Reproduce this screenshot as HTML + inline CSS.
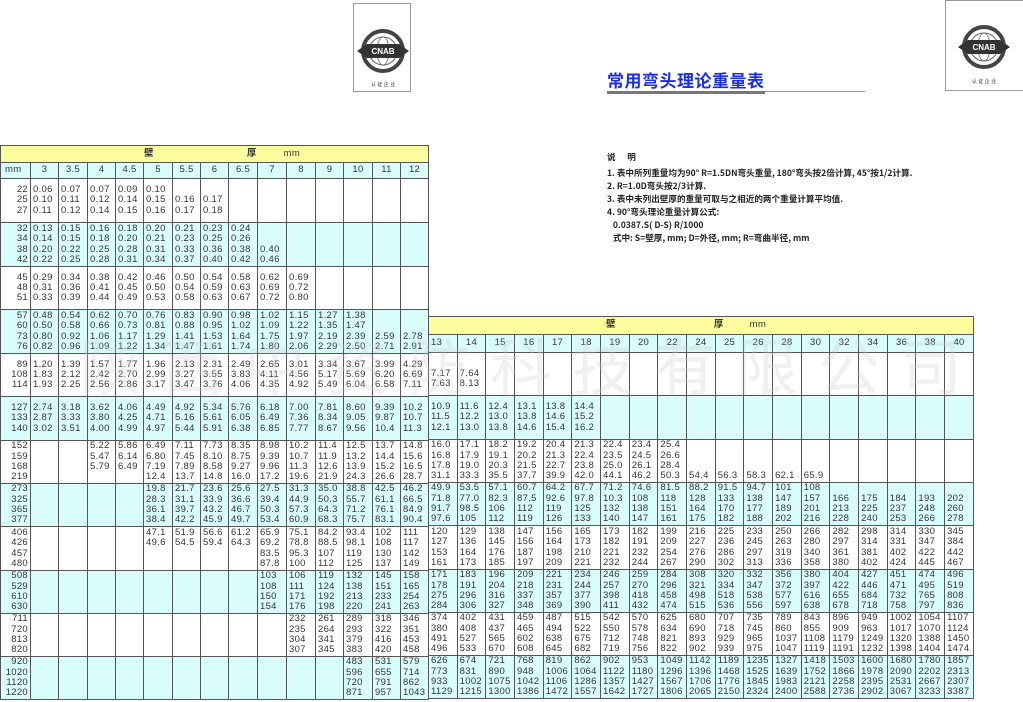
<!DOCTYPE html>
<html><head><meta charset="utf-8"><style>
body{margin:0;width:1023px;height:702px;background:#fff;position:relative;overflow:hidden;font-family:"Liberation Sans","Noto Sans CJK SC",sans-serif;}
table{position:absolute;border-collapse:collapse;table-layout:fixed;font-size:9.5px;color:#333;letter-spacing:0.3px;}
td{border:1px solid #555;padding:0 0 0 2px;vertical-align:middle;line-height:10.3px;white-space:nowrap;overflow:hidden;}
td:first-child{text-align:right;padding:0 2px 0 0;}
tr.y td{background:#fdfd9e;font-weight:bold;}
tr.h td{background:#d9fcfd;text-align:center;padding:0;}
tr.h td:first-child{text-align:left;padding-left:4px}
tr.c td{background:#d9fcfd;}
#R td:first-child{text-align:left;padding:0 0 0 2px;}
.logo{position:absolute;border:1px solid #999;background:#fff;}
.note{position:absolute;left:607px;font-size:8.6px;color:#222;font-family:"Noto Sans CJK SC",sans-serif;white-space:nowrap;font-weight:bold;}
</style></head><body>

<div class="logo" style="left:353px;top:3px;width:56px;height:87px;">
<svg width="56" height="87"><g transform="translate(29,47)">
<circle r="20" fill="none" stroke="#444" stroke-width="4"/><circle r="14" fill="none" stroke="#666" stroke-width="1"/>
<ellipse rx="6" ry="14" fill="none" stroke="#666" stroke-width="0.8"/><line x1="-14" y1="-5" x2="14" y2="-5" stroke="#666" stroke-width="0.8"/><line x1="-14" y1="5" x2="14" y2="5" stroke="#666" stroke-width="0.8"/>
<path d="M-26 0 L-16 -7 L16 -7 L26 0 L16 7 L-16 7 Z" fill="#333"/>
<text x="0" y="3" font-size="8" fill="#fff" text-anchor="middle" font-weight="bold">CNAB</text></g>
<text x="29" y="82" font-size="5" text-anchor="middle" fill="#333">认 证 企 业</text></svg></div>
<div class="logo" style="left:945px;top:0px;width:78px;height:89px;">
<svg width="78" height="89"><g transform="translate(38,46)">
<circle r="20" fill="none" stroke="#444" stroke-width="4"/><circle r="14" fill="none" stroke="#666" stroke-width="1"/>
<ellipse rx="6" ry="14" fill="none" stroke="#666" stroke-width="0.8"/><line x1="-14" y1="-5" x2="14" y2="-5" stroke="#666" stroke-width="0.8"/><line x1="-14" y1="5" x2="14" y2="5" stroke="#666" stroke-width="0.8"/>
<path d="M-26 0 L-16 -7 L16 -7 L26 0 L16 7 L-16 7 Z" fill="#333"/>
<text x="0" y="3" font-size="8" fill="#fff" text-anchor="middle" font-weight="bold">CNAB</text></g>
<text x="38" y="82" font-size="5" text-anchor="middle" fill="#333">认 证 企 业</text></svg></div>

<div style="position:absolute;left:607px;top:67px;font-size:17px;font-weight:bold;color:#1a2ee8;font-family:'Noto Sans CJK SC',sans-serif;letter-spacing:0.5px">常用弯头理论重量表</div>
<div style="position:absolute;left:607px;top:91px;width:258px;height:1px;background:#999"></div>
<div style="position:absolute;left:607px;top:91px;width:158px;height:3px;background:#777"></div>

<div class="note" style="top:151px">说&nbsp;&nbsp;&nbsp;&nbsp;&nbsp;&nbsp;明</div>
<div class="note" style="top:167px">1. 表中所列重量均为90° R=1.5DN弯头重量, 180°弯头按2倍计算, 45°按1/2计算.</div>
<div class="note" style="top:180px">2. R=1.0D弯头按2/3计算.</div>
<div class="note" style="top:193px">3. 表中未列出壁厚的重量可取与之相近的两个重量计算平均值.</div>
<div class="note" style="top:206px">4. 90°弯头理论重量计算公式:</div>
<div class="note" style="top:219px">&nbsp;&nbsp;&nbsp;0.0387.S( D-S) R/1000</div>
<div class="note" style="top:232px">&nbsp;&nbsp;&nbsp;式中: S=壁厚, mm; D=外径, mm; R=弯曲半径, mm</div>

<table style="left:0;top:145px;width:428px">
<colgroup><col style="width:30px"><col style="width:28px"><col style="width:29px"><col style="width:28px"><col style="width:28px"><col style="width:29px"><col style="width:28px"><col style="width:28px"><col style="width:29px"><col style="width:29px"><col style="width:29px"><col style="width:28px"><col style="width:29px"><col style="width:28px"><col style="width:28px"></colgroup>
<tr class="y" style="height:17px"><td colspan="15" style="text-align:left;padding:0"><span style="margin-left:143px">壁</span><span style="margin-left:93px">厚</span><span style="margin-left:27px;font-weight:normal">mm</span></td></tr>
<tr class="h" style="height:16px"><td>mm</td><td>3</td><td>3.5</td><td>4</td><td>4.5</td><td>5</td><td>5.5</td><td>6</td><td>6.5</td><td>7</td><td>8</td><td>9</td><td>10</td><td>11</td><td>12</td></tr>
<tr style="height:44px"><td>22<br>25<br>27</td><td>0.06<br>0.10<br>0.11</td><td>0.07<br>0.11<br>0.12</td><td>0.07<br>0.12<br>0.14</td><td>0.09<br>0.14<br>0.15</td><td>0.10<br>0.15<br>0.16</td><td>&nbsp;<br>0.16<br>0.17</td><td>&nbsp;<br>0.17<br>0.18</td><td></td><td></td><td></td><td></td><td></td><td></td><td></td></tr>
<tr class="c" style="height:44px"><td>32<br>34<br>38<br>42</td><td>0.13<br>0.14<br>0.20<br>0.22</td><td>0.15<br>0.15<br>0.22<br>0.25</td><td>0.16<br>0.18<br>0.25<br>0.28</td><td>0.18<br>0.20<br>0.28<br>0.31</td><td>0.20<br>0.21<br>0.31<br>0.34</td><td>0.21<br>0.23<br>0.33<br>0.37</td><td>0.23<br>0.25<br>0.36<br>0.40</td><td>0.24<br>0.26<br>0.38<br>0.42</td><td>&nbsp;<br>&nbsp;<br>0.40<br>0.46</td><td></td><td></td><td></td><td></td><td></td></tr>
<tr style="height:43px"><td>45<br>48<br>51</td><td>0.29<br>0.31<br>0.33</td><td>0.34<br>0.36<br>0.39</td><td>0.38<br>0.41<br>0.44</td><td>0.42<br>0.45<br>0.49</td><td>0.46<br>0.50<br>0.53</td><td>0.50<br>0.54<br>0.58</td><td>0.54<br>0.59<br>0.63</td><td>0.58<br>0.63<br>0.67</td><td>0.62<br>0.69<br>0.72</td><td>0.69<br>0.72<br>0.80</td><td></td><td></td><td></td><td></td></tr>
<tr class="c" style="height:44px"><td>57<br>60<br>73<br>76</td><td>0.48<br>0.50<br>0.80<br>0.82</td><td>0.54<br>0.58<br>0.92<br>0.96</td><td>0.62<br>0.66<br>1.06<br>1.09</td><td>0.70<br>0.73<br>1.17<br>1.22</td><td>0.76<br>0.81<br>1.29<br>1.34</td><td>0.83<br>0.88<br>1.41<br>1.47</td><td>0.90<br>0.95<br>1.53<br>1.61</td><td>0.98<br>1.02<br>1.64<br>1.74</td><td>1.02<br>1.09<br>1.75<br>1.80</td><td>1.15<br>1.22<br>1.97<br>2.06</td><td>1.27<br>1.35<br>2.19<br>2.29</td><td>1.38<br>1.47<br>2.39<br>2.50</td><td>&nbsp;<br>&nbsp;<br>2.59<br>2.71</td><td>&nbsp;<br>&nbsp;<br>2.78<br>2.91</td></tr>
<tr style="height:43px"><td>89<br>108<br>114</td><td>1.20<br>1.83<br>1.93</td><td>1.39<br>2.12<br>2.25</td><td>1.57<br>2.42<br>2.56</td><td>1.77<br>2.70<br>2.86</td><td>1.96<br>2.99<br>3.17</td><td>2.13<br>3.27<br>3.47</td><td>2.31<br>3.55<br>3.76</td><td>2.49<br>3.83<br>4.06</td><td>2.65<br>4.11<br>4.35</td><td>3.01<br>4.56<br>4.92</td><td>3.34<br>5.17<br>5.49</td><td>3.67<br>5.69<br>6.04</td><td>3.99<br>6.20<br>6.58</td><td>4.29<br>6.69<br>7.11</td></tr>
<tr class="c" style="height:44px"><td>127<br>133<br>140</td><td>2.74<br>2.87<br>3.02</td><td>3.18<br>3.33<br>3.51</td><td>3.62<br>3.80<br>4.00</td><td>4.06<br>4.25<br>4.99</td><td>4.49<br>4.71<br>4.97</td><td>4.92<br>5.16<br>5.44</td><td>5.34<br>5.61<br>5.91</td><td>5.76<br>6.05<br>6.38</td><td>6.18<br>6.49<br>6.85</td><td>7.00<br>7.36<br>7.77</td><td>7.81<br>8.34<br>8.67</td><td>8.60<br>9.05<br>9.56</td><td>9.39<br>9.87<br>10.4</td><td>10.2<br>10.7<br>11.3</td></tr>
<tr style="height:43px"><td>152<br>159<br>168<br>219</td><td></td><td></td><td>5.22<br>5.47<br>5.79<br>&nbsp;</td><td>5.86<br>6.14<br>6.49<br>&nbsp;</td><td>6.49<br>6.80<br>7.19<br>12.4</td><td>7.11<br>7.45<br>7.89<br>13.7</td><td>7.73<br>8.10<br>8.58<br>14.8</td><td>8.35<br>8.75<br>9.27<br>16.0</td><td>8.98<br>9.39<br>9.96<br>17.2</td><td>10.2<br>10.7<br>11.3<br>19.6</td><td>11.4<br>11.9<br>12.6<br>21.9</td><td>12.5<br>13.2<br>13.9<br>24.3</td><td>13.7<br>14.4<br>15.2<br>26.6</td><td>14.8<br>15.6<br>16.5<br>28.7</td></tr>
<tr class="c" style="height:43px"><td>273<br>325<br>365<br>377</td><td></td><td></td><td></td><td></td><td>19.8<br>28.3<br>36.1<br>38.4</td><td>21.7<br>31.1<br>39.7<br>42.2</td><td>23.6<br>33.9<br>43.2<br>45.9</td><td>25.6<br>36.6<br>46.7<br>49.7</td><td>27.5<br>39.4<br>50.3<br>53.4</td><td>31.3<br>44.9<br>57.3<br>60.9</td><td>35.0<br>50.3<br>64.3<br>68.3</td><td>38.8<br>55.7<br>71.2<br>75.7</td><td>42.5<br>61.1<br>76.1<br>83.1</td><td>46.2<br>66.5<br>84.9<br>90.4</td></tr>
<tr style="height:44px"><td>406<br>426<br>457<br>480</td><td></td><td></td><td></td><td></td><td>47.1<br>49.6<br>&nbsp;<br>&nbsp;</td><td>51.9<br>54.5<br>&nbsp;<br>&nbsp;</td><td>56.6<br>59.4<br>&nbsp;<br>&nbsp;</td><td>61.2<br>64.3<br>&nbsp;<br>&nbsp;</td><td>65.9<br>69.2<br>83.5<br>87.8</td><td>75.1<br>78.8<br>95.3<br>100</td><td>84.2<br>88.5<br>107<br>112</td><td>93.4<br>98.1<br>119<br>125</td><td>102<br>108<br>130<br>137</td><td>111<br>117<br>142<br>149</td></tr>
<tr class="c" style="height:43px"><td>508<br>529<br>610<br>630</td><td></td><td></td><td></td><td></td><td></td><td></td><td></td><td></td><td>103<br>108<br>150<br>154</td><td>106<br>111<br>171<br>176</td><td>119<br>124<br>192<br>198</td><td>132<br>138<br>213<br>220</td><td>145<br>151<br>233<br>241</td><td>158<br>165<br>254<br>263</td></tr>
<tr style="height:43px"><td>711<br>720<br>813<br>820</td><td></td><td></td><td></td><td></td><td></td><td></td><td></td><td></td><td></td><td>232<br>235<br>304<br>307</td><td>261<br>264<br>341<br>345</td><td>289<br>293<br>379<br>383</td><td>318<br>322<br>416<br>420</td><td>346<br>351<br>453<br>458</td></tr>
<tr class="c" style="height:43px"><td>920<br>1020<br>1120<br>1220</td><td></td><td></td><td></td><td></td><td></td><td></td><td></td><td></td><td></td><td></td><td></td><td>483<br>596<br>720<br>871</td><td>531<br>655<br>791<br>957</td><td>579<br>714<br>862<br>1043</td></tr>
</table>

<table id="R" style="left:428px;top:316px;width:545px">
<colgroup><col span="19" style="width:28.68px"></colgroup>
<tr class="y" style="height:18px"><td colspan="19" style="text-align:left;padding:0"><span style="margin-left:177px">壁</span><span style="margin-left:98px">厚</span><span style="margin-left:26px;font-weight:normal">mm</span></td></tr>
<tr class="h" style="height:18px"><td>13</td><td>14</td><td>15</td><td>16</td><td>17</td><td>18</td><td>19</td><td>20</td><td>22</td><td>24</td><td>25</td><td>26</td><td>28</td><td>30</td><td>32</td><td>34</td><td>36</td><td>38</td><td>40</td></tr>
<tr style="height:43px"><td>&nbsp;<br>7.17<br>7.63</td><td>&nbsp;<br>7.64<br>8.13</td><td></td><td></td><td></td><td></td><td></td><td></td><td></td><td></td><td></td><td></td><td></td><td></td><td></td><td></td><td></td><td></td><td></td></tr>
<tr class="c" style="height:44px"><td>10.9<br>11.5<br>12.1</td><td>11.6<br>12.2<br>13.0</td><td>12.4<br>13.0<br>13.8</td><td>13.1<br>13.8<br>14.6</td><td>13.8<br>14.6<br>15.4</td><td>14.4<br>15.2<br>16.2</td><td></td><td></td><td></td><td></td><td></td><td></td><td></td><td></td><td></td><td></td><td></td><td></td><td></td></tr>
<tr style="height:43px"><td>16.0<br>16.8<br>17.8<br>31.1</td><td>17.1<br>17.9<br>19.0<br>33.3</td><td>18.2<br>19.1<br>20.3<br>35.5</td><td>19.2<br>20.2<br>21.5<br>37.7</td><td>20.4<br>21.3<br>22.7<br>39.9</td><td>21.3<br>22.4<br>23.8<br>42.0</td><td>22.4<br>23.5<br>25.0<br>44.1</td><td>23.4<br>24.5<br>26.1<br>46.2</td><td>25.4<br>26.6<br>28.4<br>50.3</td><td>&nbsp;<br>&nbsp;<br>&nbsp;<br>54.4</td><td>&nbsp;<br>&nbsp;<br>&nbsp;<br>56.3</td><td>&nbsp;<br>&nbsp;<br>&nbsp;<br>58.3</td><td>&nbsp;<br>&nbsp;<br>&nbsp;<br>62.1</td><td>&nbsp;<br>&nbsp;<br>&nbsp;<br>65.9</td><td></td><td></td><td></td><td></td><td></td></tr>
<tr class="c" style="height:43px"><td>49.9<br>71.8<br>91.7<br>97.6</td><td>53.5<br>77.0<br>98.5<br>105</td><td>57.1<br>82.3<br>106<br>112</td><td>60.7<br>87.5<br>112<br>119</td><td>64.2<br>92.6<br>119<br>126</td><td>67.7<br>97.8<br>125<br>133</td><td>71.2<br>10.3<br>132<br>140</td><td>74.6<br>108<br>138<br>147</td><td>81.5<br>118<br>151<br>161</td><td>88.2<br>128<br>164<br>175</td><td>91.5<br>133<br>170<br>182</td><td>94.7<br>138<br>177<br>188</td><td>101<br>147<br>189<br>202</td><td>108<br>157<br>201<br>216</td><td>&nbsp;<br>166<br>213<br>228</td><td>&nbsp;<br>175<br>225<br>240</td><td>&nbsp;<br>184<br>237<br>253</td><td>&nbsp;<br>193<br>248<br>266</td><td>&nbsp;<br>202<br>260<br>278</td></tr>
<tr style="height:44px"><td>120<br>127<br>153<br>161</td><td>129<br>136<br>164<br>173</td><td>138<br>145<br>176<br>185</td><td>147<br>156<br>187<br>197</td><td>156<br>164<br>198<br>209</td><td>165<br>173<br>210<br>221</td><td>173<br>182<br>221<br>232</td><td>182<br>191<br>232<br>244</td><td>199<br>209<br>254<br>267</td><td>216<br>227<br>276<br>290</td><td>225<br>236<br>286<br>302</td><td>233<br>245<br>297<br>313</td><td>250<br>263<br>319<br>336</td><td>266<br>280<br>340<br>358</td><td>282<br>297<br>361<br>380</td><td>298<br>314<br>381<br>402</td><td>314<br>331<br>402<br>424</td><td>330<br>347<br>422<br>445</td><td>345<br>384<br>442<br>467</td></tr>
<tr class="c" style="height:43px"><td>171<br>178<br>275<br>284</td><td>183<br>191<br>296<br>306</td><td>196<br>204<br>316<br>327</td><td>209<br>218<br>337<br>348</td><td>221<br>231<br>357<br>369</td><td>234<br>244<br>377<br>390</td><td>246<br>257<br>398<br>411</td><td>259<br>270<br>418<br>432</td><td>284<br>296<br>458<br>474</td><td>308<br>321<br>498<br>515</td><td>320<br>334<br>518<br>536</td><td>332<br>347<br>538<br>556</td><td>356<br>372<br>577<br>597</td><td>380<br>397<br>616<br>638</td><td>404<br>422<br>655<br>678</td><td>427<br>446<br>684<br>718</td><td>451<br>471<br>732<br>758</td><td>474<br>495<br>765<br>797</td><td>496<br>519<br>808<br>836</td></tr>
<tr style="height:43px"><td>374<br>380<br>491<br>496</td><td>402<br>408<br>527<br>533</td><td>431<br>437<br>565<br>670</td><td>459<br>465<br>602<br>608</td><td>487<br>494<br>638<br>645</td><td>515<br>522<br>675<br>682</td><td>542<br>550<br>712<br>719</td><td>570<br>578<br>748<br>756</td><td>625<br>634<br>821<br>822</td><td>680<br>690<br>893<br>902</td><td>707<br>718<br>929<br>939</td><td>735<br>745<br>965<br>975</td><td>789<br>860<br>1037<br>1047</td><td>843<br>855<br>1108<br>1119</td><td>896<br>909<br>1179<br>1191</td><td>949<br>963<br>1249<br>1232</td><td>1002<br>1017<br>1320<br>1398</td><td>1054<br>1070<br>1388<br>1404</td><td>1107<br>1124<br>1450<br>1474</td></tr>
<tr class="c" style="height:43px"><td>626<br>773<br>933<br>1129</td><td>674<br>831<br>1002<br>1215</td><td>721<br>890<br>1075<br>1300</td><td>768<br>948<br>1042<br>1386</td><td>819<br>1006<br>1106<br>1472</td><td>862<br>1064<br>1286<br>1557</td><td>902<br>1122<br>1357<br>1642</td><td>953<br>1180<br>1427<br>1727</td><td>1049<br>1296<br>1567<br>1806</td><td>1142<br>1396<br>1706<br>2065</td><td>1189<br>1468<br>1776<br>2150</td><td>1235<br>1525<br>1845<br>2324</td><td>1327<br>1639<br>1983<br>2400</td><td>1418<br>1752<br>2121<br>2588</td><td>1503<br>1866<br>2258<br>2736</td><td>1600<br>1978<br>2395<br>2902</td><td>1680<br>2090<br>2531<br>3067</td><td>1780<br>2202<br>2667<br>3233</td><td>1857<br>2313<br>2307<br>3387</td></tr>
</table>

<div style="position:absolute;left:80px;top:318px;font-size:62px;color:rgba(200,200,200,0.28);font-family:'Noto Sans CJK SC',sans-serif;letter-spacing:20px;white-space:nowrap;pointer-events:none">陕西中资防科技有限公司</div>
</body></html>
